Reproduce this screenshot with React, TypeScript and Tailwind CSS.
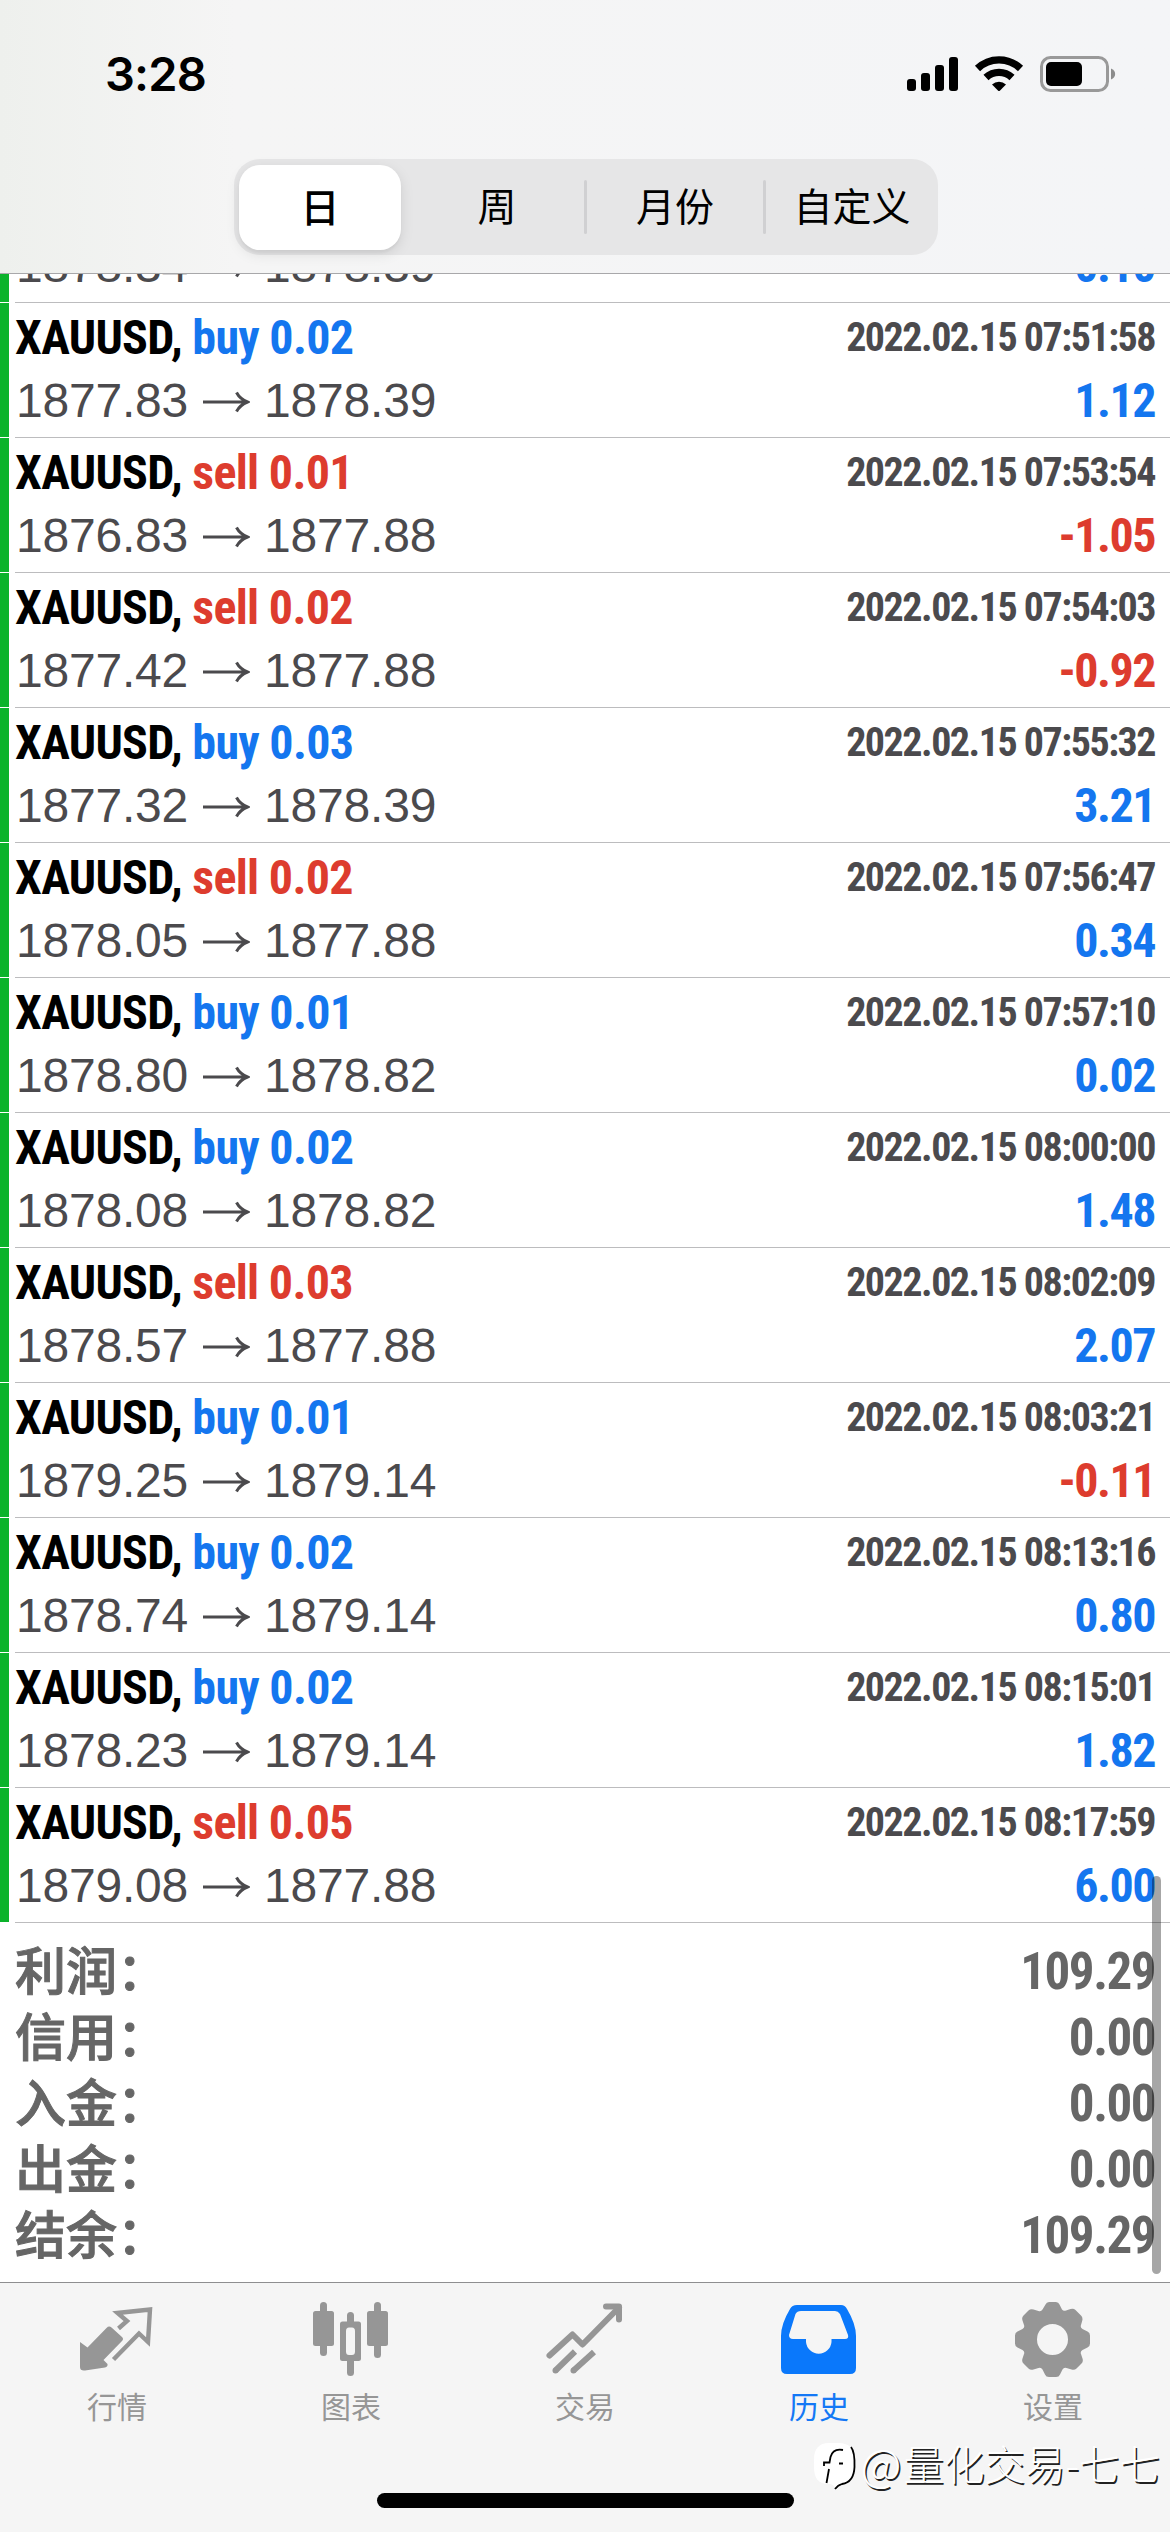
import type { ReactNode } from "react";

interface Deal {
  side: "buy" | "sell";
  lots: string;
  open: string;
  close: string;
  time: string;
  profit: string;
}

const deals: Deal[] = [
  { side: "buy", lots: "0.02", open: "1877.83", close: "1878.39", time: "2022.02.15 07:51:58", profit: "1.12" },
  { side: "sell", lots: "0.01", open: "1876.83", close: "1877.88", time: "2022.02.15 07:53:54", profit: "-1.05" },
  { side: "sell", lots: "0.02", open: "1877.42", close: "1877.88", time: "2022.02.15 07:54:03", profit: "-0.92" },
  { side: "buy", lots: "0.03", open: "1877.32", close: "1878.39", time: "2022.02.15 07:55:32", profit: "3.21" },
  { side: "sell", lots: "0.02", open: "1878.05", close: "1877.88", time: "2022.02.15 07:56:47", profit: "0.34" },
  { side: "buy", lots: "0.01", open: "1878.80", close: "1878.82", time: "2022.02.15 07:57:10", profit: "0.02" },
  { side: "buy", lots: "0.02", open: "1878.08", close: "1878.82", time: "2022.02.15 08:00:00", profit: "1.48" },
  { side: "sell", lots: "0.03", open: "1878.57", close: "1877.88", time: "2022.02.15 08:02:09", profit: "2.07" },
  { side: "buy", lots: "0.01", open: "1879.25", close: "1879.14", time: "2022.02.15 08:03:21", profit: "-0.11" },
  { side: "buy", lots: "0.02", open: "1878.74", close: "1879.14", time: "2022.02.15 08:13:16", profit: "0.80" },
  { side: "buy", lots: "0.02", open: "1878.23", close: "1879.14", time: "2022.02.15 08:15:01", profit: "1.82" },
  { side: "sell", lots: "0.05", open: "1879.08", close: "1877.88", time: "2022.02.15 08:17:59", profit: "6.00" },
];

const totals = [
  { label: "利润", value: "109.29" },
  { label: "信用", value: "0.00" },
  { label: "入金", value: "0.00" },
  { label: "出金", value: "0.00" },
  { label: "结余", value: "109.29" },
];

const StatusBar = () => (
  <div className="flex h-[159px] items-start justify-between pr-[54px] pl-[105px]">
    <span className="mt-[45px] font-['Inter',sans-serif] text-[47px] leading-[58px] font-semibold tracking-[-0.8px]">
      3:28
    </span>
    <svg className="mt-[50px]" width="210" height="48" viewBox="906 50 210 48">
      <rect x="907" y="79" width="9" height="12" rx="3" />
      <rect x="921" y="73" width="9" height="18" rx="3" />
      <rect x="935" y="65" width="9" height="26" rx="3" />
      <rect x="949" y="57" width="9" height="34" rx="3" />
      <g fill="none" stroke="#000" strokeWidth="7.4">
        <path d="M977.5 68.5a31 31 0 0 1 43 0" />
        <path d="M986 77.5a19 19 0 0 1 26 0" />
      </g>
      <path d="M992 84.5a10.5 10.5 0 0 1 14 0l-6.2 6.2a1.2 1.2 0 0 1-1.6 0z" />
      <rect x="1041.5" y="57.5" width="66" height="33" rx="9" fill="none" stroke="#999" strokeWidth="3" />
      <rect x="1046" y="62" width="36" height="24" rx="5" />
      <path d="M1111 68.5c5.5 2 5.5 9 0 11z" fill="#8c8c8c" />
    </svg>
  </div>
);

const PeriodPicker = () => (
  <div className="ml-[234px] flex h-[96px] w-[704px] items-center rounded-[26px] bg-[#e6e6e7] text-[39px]">
    <div className="mr-[9px] ml-[5px] flex h-[85px] w-[162px] items-center justify-center rounded-[21px] bg-white font-medium shadow-[0_4px_14px_rgba(0,0,0,0.1),0_3px_3px_rgba(0,0,0,0.04)]">
      <span className="pb-[4px]">日</span>
    </div>
    <div className="w-[174px] pb-[5px] text-center">周</div>
    <div className="h-[54px] w-[3px] rounded-full bg-[#d0d0d2]" />
    <div className="w-[176px] pb-[5px] text-center">月份</div>
    <div className="h-[54px] w-[3px] rounded-full bg-[#d0d0d2]" />
    <div className="flex-1 pb-[5px] text-center">自定义</div>
  </div>
);

const PriceLine = ({ open, close, profit }: { open: string; close: string; profit: string }) => (
  <div className="flex h-[63px] justify-between text-[48px] leading-[63px]">
    <div className="flex items-center pl-px font-['Liberation_Sans',sans-serif] tracking-[-0.2px] text-[#4b4a4d]">
      {open}
      <svg className="mt-[3px] mr-[14px] ml-[14px]" width="48" height="26" viewBox="0 0 48 26" fill="none" stroke="currentColor" strokeWidth="3">
        <path d="M1 13h44M34.5 3.5Q38 10 45.5 13Q38 16 34.5 22.5" />
      </svg>
      {close}
    </div>
    <div
      className={`font-['Roboto_Condensed','Liberation_Sans',sans-serif] font-bold tracking-[-1.5px] ${
        profit.startsWith("-") ? "text-[#dd3c2e]" : "text-[#1476ef]"
      }`}
    >
      {profit}
    </div>
  </div>
);

const DealRow = ({ deal }: { deal: Deal }) => (
  <div className="flex h-[135px] shrink-0">
    <div className="h-[134px] w-[9px] bg-[#0bb32b]" />
    <div className="ml-[6px] flex-1 border-b border-[#bcbcbe] pt-[3px] pr-[15px]">
      <div className="flex h-[63px] justify-between font-['Roboto_Condensed','Liberation_Sans',sans-serif] text-[48px] leading-[63px] font-bold tracking-[-0.7px]">
        <div>
          XAUUSD,{" "}
          <span className={deal.side === "buy" ? "text-[#1476ef]" : "text-[#dd3c2e]"}>
            {deal.side} {deal.lots}
          </span>
        </div>
        <div className="text-[40px] leading-[63px] tracking-[-1.5px] text-[#4b4a4d]">{deal.time}</div>
      </div>
      <PriceLine open={deal.open} close={deal.close} profit={deal.profit} />
    </div>
  </div>
);

const Tab = ({ label, active, children }: { label: string; active?: boolean; children: ReactNode }) => (
  <div className={`flex flex-1 flex-col items-center ${active ? "text-[#1478f5]" : "text-[#969696]"}`}>
    <svg className="mt-[16px]" width="84" height="84" viewBox="0 0 84 84" fill="currentColor">
      {children}
    </svg>
    <span className="text-[30px] leading-[44px]">{label}</span>
  </div>
);

const TabBar = () => (
  <div className="flex h-[250px] border-t border-[#8e8e90] bg-[#f5f5f5]">
    <Tab label="行情">
      <path d="M5 43L12.5 48.5L31.5 29Q34 26.5 36.5 28.5L47 38Q49 40 47 42L28.5 61L32.5 65Q33 67.5 30 68.5L10 71.5Q5 72 5 68Z" />
      <path d="M43.5 29.5L52 22L42.5 14L75 10.5L73 43L64 34.5L38.5 60.5" fill="none" stroke="currentColor" strokeWidth="4.4" />
    </Tab>
    <Tab label="图表">
      <rect x="11" y="3" width="7" height="54" rx="3.5" />
      <rect x="4" y="12" width="21" height="35" rx="2.5" />
      <rect x="65" y="3" width="7" height="56" rx="3.5" />
      <rect x="58" y="12" width="21" height="35" rx="2.5" />
      <path
        d="M38 22.5v-6a3.5 3.5 0 0 1 7 0V22.5h4.5q2.5 0 2.5 2.5v34.5q0 2.5-2.5 2.5H45v11.5a3.5 3.5 0 0 1-7 0V62h-4.5q-2.5 0-2.5-2.5V25q0-2.5 2.5-2.5zM37 32v20.5q0 3.5 3 3.5h3q3 0 3-3.5V32q0-3.5-3-3.5h-3q-3 0-3 3.5z"
        fillRule="evenodd"
      />
    </Tab>
    <Tab label="交易">
      <g fill="none" stroke="currentColor" strokeWidth="6" strokeLinejoin="round">
        <path d="M6.5 56.5L29.5 35.5L39.5 45.5L76 8.5" strokeLinecap="round" />
        <path d="M63 7.5H76V20.5" strokeLinecap="round" />
        <path d="M12.5 71.5L32 52.5M30.5 71.5L51 53" />
      </g>
      <circle cx="12.5" cy="71.5" r="3" />
      <circle cx="30.5" cy="71.5" r="3" />
    </Tab>
    <Tab label="历史" active>
      <path
        transform="translate(0 1)"
        d="M20 5H64Q68 5 70 9Q79 24 79 36V68Q79 74 73 74H10Q4 74 4 68V36Q4 24 13 9Q15 5 20 5zM24 11Q20 11 18.5 14L12 35Q12 39 16 39H29V42A12.8 12.8 0 0 0 54.5 42V39H68Q72 39 71 35L63 14Q61 11 58 11z"
        fill="#0a78fb"
        fillRule="evenodd"
      />
    </Tab>
    <Tab label="设置">
      <path
        transform="translate(41.5 40.5)"
        fillRule="evenodd"
        d="M-7 -35Q-6 -37.5 -3.5 -37.5H3.5Q6 -37.5 7 -35L9.5 -30Q11 -28 13.5 -29L18 -30.5Q21 -31.5 23 -29.5L28.5 -24Q30.5 -22 29.8 -19L28.5 -14.5Q27.5 -12 30 -10.5L35 -8Q37.5 -7 37.5 -4V4Q37.5 7 35 8L30 10.5Q27.5 12 28.5 14.5L30 19Q31 22 29 24L24 29Q22 31 19 30L14 28.5Q11.5 27.5 10 30L7.5 35Q6.5 37.5 3.5 37.5H-3.5Q-6.5 37.5 -7.5 35L-10 30Q-11.5 27.5 -14 28.5L-19 30Q-22 31 -24 29L-29 24Q-31 22 -30 19L-28.5 14.5Q-27.5 12 -30 10.5L-35 8Q-37.5 7 -37.5 4V-4Q-37.5 -7 -35 -8L-30 -10.5Q-27.5 -12 -28.5 -14.5L-30 -19Q-31 -22 -29 -24L-24 -29Q-22 -31 -19 -30L-14 -28.5Q-11.5 -27.5 -10 -30zM0 -15.5A15.5 15.5 0 1 0 0 15.5A15.5 15.5 0 1 0 0 -15.5z"
      />
    </Tab>
  </div>
);

const Watermark = () => (
  <div className="absolute top-[2434px] right-[10px] flex items-center text-[40.5px] leading-[54px] font-light whitespace-nowrap text-white [text-shadow:1.5px_1.5px_0_#222]">
    <svg className="mt-[7px] mr-[3px]" width="46" height="50" viewBox="0 0 46 50" fill="none">
      <path d="M17 2H26C38 2 43 8 43 20V26C43 37 39 42 30 43Q26 44 23 48Q22 43 17 43C6 43 2 37 2 26V18C2 8 7 2 17 2z" fill="#fff" />
      <path d="M39 6Q43 11 42.5 26C42 38 37 42 30 43Q26 44 23 48M31 9Q21 7 18.5 16L17.5 21.5H12V25M17 28L14.5 42M27 22.5h4" stroke="#000" strokeWidth="1.8" />
    </svg>
    <span className="mr-[2px] text-[45px]">@</span>
    <span>量化交易-七七</span>
  </div>
);

const App = () => {
  return (
    <div className="relative flex h-[2532px] w-[1170px] flex-col overflow-hidden bg-white font-['Noto_Sans_CJK_SC',sans-serif] text-black">
      <header className="h-[274px] shrink-0 border-b border-[#a8a8aa] bg-linear-to-r from-[#eef0ed] via-[#f5f5f5] via-20% to-[#f4f5f7]">
        <StatusBar />
        <PeriodPicker />
      </header>

      <main className="relative h-[2008px] shrink-0 overflow-hidden">
        {/* row scrolled halfway under the header */}
        <div className="flex h-[29px] overflow-hidden">
          <div className="h-[28px] w-[9px] bg-[#0bb32b]" />
          <div className="ml-[6px] flex flex-1 flex-col justify-end border-b border-[#bcbcbe] pr-[15px] pb-[5px]">
            <PriceLine open="1878.34" close="1878.39" profit="0.10" />
          </div>
        </div>
        {deals.map((deal) => (
          <DealRow key={deal.time} deal={deal} />
        ))}
        <div className="px-[15px] pt-[14px] text-[#666]">
          {totals.map((item) => (
            <div key={item.label} className="flex h-[66px] justify-between text-[51px]">
              <span className="leading-[62px] font-medium [-webkit-text-stroke:1px_#666]">{item.label}：</span>
              <span className="font-['Roboto_Condensed','Liberation_Sans',sans-serif] leading-[70px] font-bold tracking-[-1.5px]">
                {item.value}
              </span>
            </div>
          ))}
        </div>
        <div className="absolute top-[1602px] right-[9px] h-[398px] w-[9px] rounded-full bg-black/35" />
      </main>

      <TabBar />
      <Watermark />
      <div className="absolute top-[2493px] left-[377px] h-[15px] w-[417px] rounded-full bg-black" />
    </div>
  );
};

export default App;
